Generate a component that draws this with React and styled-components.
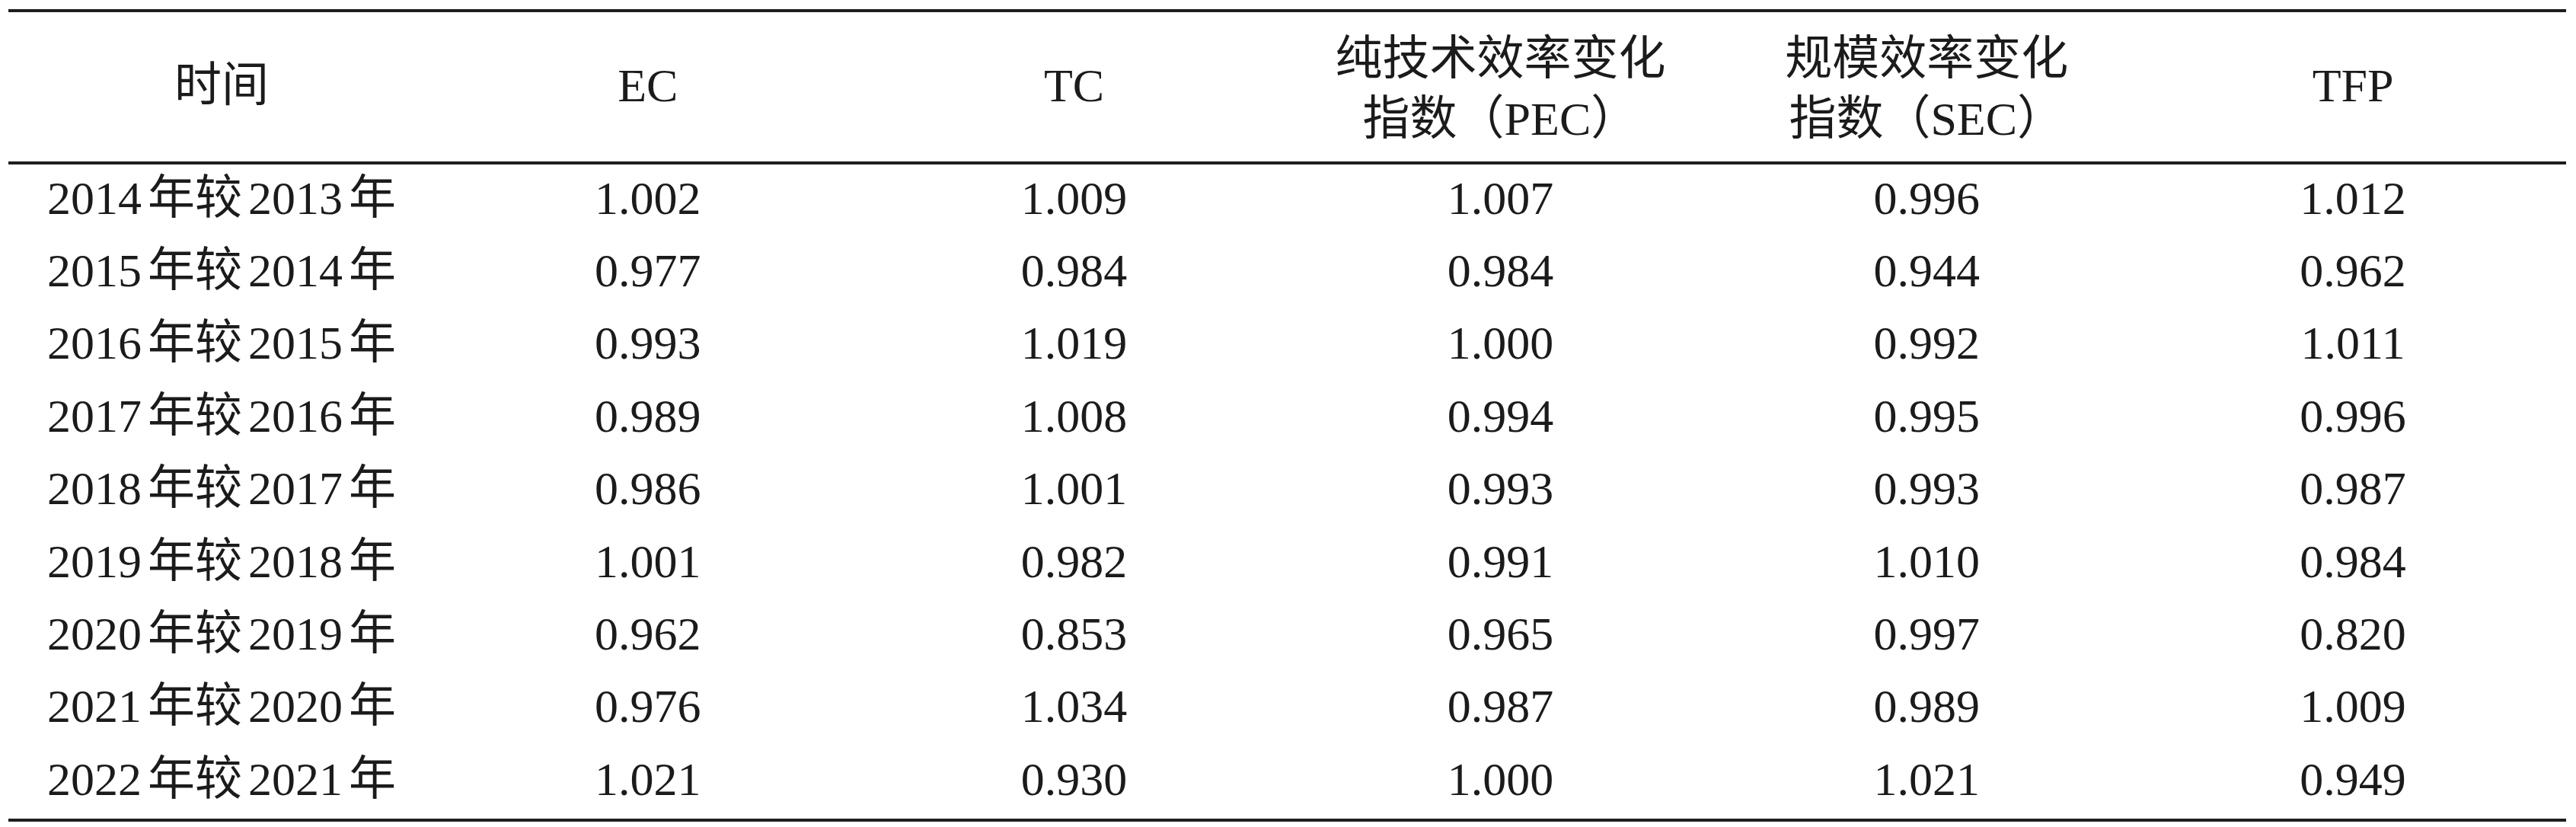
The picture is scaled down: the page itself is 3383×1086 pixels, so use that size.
import React from "react";
import styled, { createGlobalStyle } from "styled-components";

const Global = createGlobalStyle`
  html, body { margin: 0; padding: 0; background: #ffffff; }
  body { font-family: "Liberation Serif", "Noto Sans CJK SC", serif; color: #1b1b1b; }
`;

const Page = styled.div`
  padding: 12px 13px 0 11px;
  width: 3359px;
`;

const Table = styled.div`
  width: 100%;
  border-top: 4px solid #1e1e1e;
  border-bottom: 4px solid #1e1e1e;
`;

const Row = styled.div`
  display: grid;
  grid-template-columns: repeat(6, 1fr);
  align-items: center;
  height: ${(p) => p.$height}px;
  border-bottom: ${(p) => (p.$rule ? "4px solid #1e1e1e" : "none")};
`;

const Cell = styled.div`
  text-align: center;
  font-size: 62px;
  line-height: ${(p) => p.$lh || 72}px;
  white-space: pre-line;
  padding-top: ${(p) => p.$down || 0}px;
  padding-bottom: ${(p) => p.$up || 0}px;
`;

const Han = styled.span`
  margin-left: 8px;
  margin-right: ${(p) => (p.$last ? 0 : 8)}px;
`;

const headers = [
  "时间",
  "EC",
  "TC",
  "纯技术效率变化\n指数（PEC）",
  "规模效率变化\n指数（SEC）",
  "TFP",
];

const data = [
  ["2014", "2013", "1.002", "1.009", "1.007", "0.996", "1.012"],
  ["2015", "2014", "0.977", "0.984", "0.984", "0.944", "0.962"],
  ["2016", "2015", "0.993", "1.019", "1.000", "0.992", "1.011"],
  ["2017", "2016", "0.989", "1.008", "0.994", "0.995", "0.996"],
  ["2018", "2017", "0.986", "1.001", "0.993", "0.993", "0.987"],
  ["2019", "2018", "1.001", "0.982", "0.991", "1.010", "0.984"],
  ["2020", "2019", "0.962", "0.853", "0.965", "0.997", "0.820"],
  ["2021", "2020", "0.976", "1.034", "0.987", "0.989", "1.009"],
  ["2022", "2021", "1.021", "0.930", "1.000", "1.021", "0.949"],
];

export default function App() {
  return (
    <>
      <Global />
      <Page>
        <Table>
          <Row $height={196} $rule>
            {headers.map((h) => {
              const two = h.includes("\n");
              return (
                <Cell key={h} $lh={79} $down={two ? 6 : 0} $up={two ? 0 : 4}>
                  {h}
                </Cell>
              );
            })}
          </Row>
          {data.map(([a, b, ...vals]) => (
            <Row key={a} $height={95.4}>
              <Cell $up={8}>
                {a}
                <Han>年较</Han>
                {b}
                <Han $last>年</Han>
              </Cell>
              {vals.map((v, i) => (
                <Cell key={i} $up={8}>{v}</Cell>
              ))}
            </Row>
          ))}
        </Table>
      </Page>
    </>
  );
}
